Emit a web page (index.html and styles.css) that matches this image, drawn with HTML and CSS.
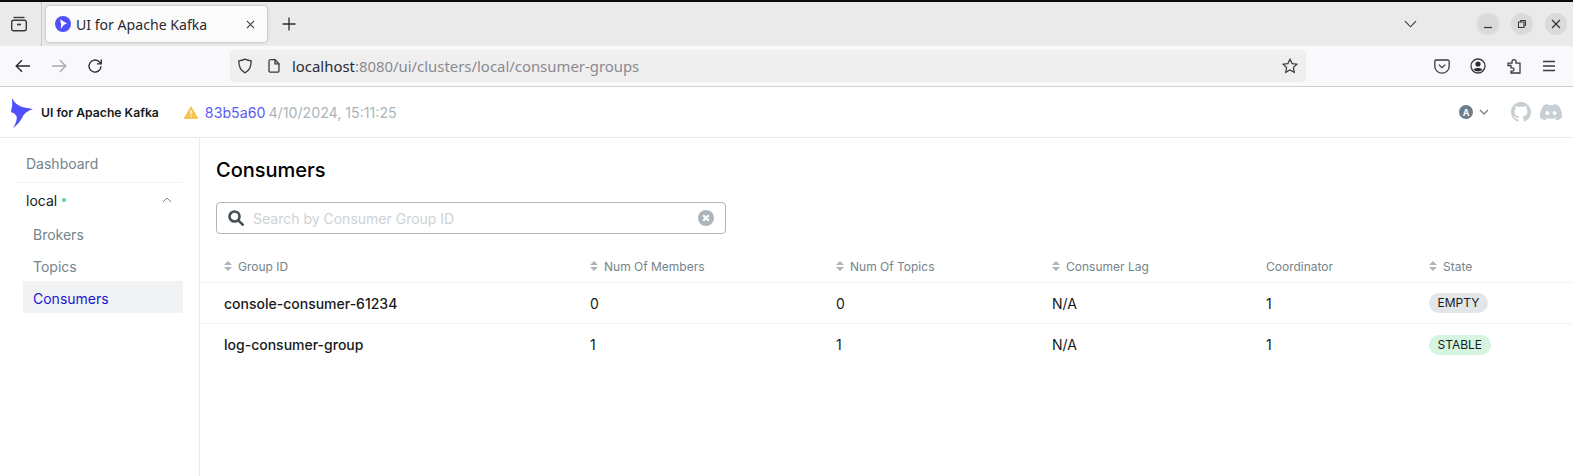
FILE: index.html
```html
<!DOCTYPE html>
<html lang="en">
<head>
<meta charset="utf-8">
<title>UI for Apache Kafka</title>
<link rel="stylesheet" href="styles.css">
</head>
<body>
<div class="tabbar">
  <div class="tabs-btn">
    <svg width="18" height="18" viewBox="0 0 18 18" fill="none" stroke="#3a3a3e" stroke-width="1.4"><path d="M3.500 2.500h11"/><rect x="1.700" y="5.200" width="14.600" height="10.600" rx="2"/><path d="M7 9.500h4" stroke-width="1.600"/></svg>
  </div>
  <div class="tab">
    <svg class="favicon" width="16" height="16" viewBox="0 0 16 16"><circle cx="8" cy="8" r="8" fill="#4f4ffb"/><path d="M5 3.200l7 4.300-3 1.300-3.200 4.200.4-4.300z" fill="#fff"/></svg>
    <span class="tab-title">UI for Apache Kafka</span>
    <svg class="tab-close" width="9" height="9" viewBox="0 0 10 10" stroke="#3a3a3e" stroke-width="1.200"><path d="M1 1l8 8M9 1l-8 8"/></svg>
  </div>
  <svg class="newtab" width="14" height="14" viewBox="0 0 14 14" stroke="#2b2a33" stroke-width="1.300"><path d="M7 .5v13M.5 7h13"/></svg>
  <div class="tabbar-right">
    <svg class="tablist" width="13" height="8" viewBox="0 0 14 8" fill="none" stroke="#3a3a3e" stroke-width="1.200"><path d="M1 1l6 6 6-6"/></svg>
    <span class="winbtn"><svg width="10" height="10" viewBox="0 0 10 10" stroke="#333" stroke-width="1.200"><path d="M1 8.500h8"/></svg></span>
    <span class="winbtn"><svg width="10" height="10" viewBox="0 0 10 10" fill="none" stroke="#333" stroke-width="1"><rect x="1.500" y="3" width="5.500" height="5.500"/><path d="M3.500 3V1.500h5v5H7"/></svg></span>
    <span class="winbtn"><svg width="10" height="10" viewBox="0 0 10 10" stroke="#333" stroke-width="1.200"><path d="M1 1l8 8M9 1l-8 8"/></svg></span>
  </div>
</div>
<div class="toolbar">
  <svg class="tool back" width="16" height="14" viewBox="0 0 16 14" fill="none" stroke="#2b2a33" stroke-width="1.400"><path d="M15 7H1.500M7 1.200L1.200 7 7 12.800"/></svg>
  <svg class="tool fwd" width="16" height="14" viewBox="0 0 16 14" fill="none" stroke="#a9a9ad" stroke-width="1.400"><path d="M1 7h13.500M9 1.200L14.800 7 9 12.800"/></svg>
  <svg class="tool reload" width="16" height="16" viewBox="0 0 16 16" fill="none" stroke="#2b2a33" stroke-width="1.400"><path d="M14 8.200A6 6 0 1 1 12 3.600L14 5.600"/><path d="M14.300 1.400v4.400H9.900" stroke-width="1.300"/></svg>
  <div class="urlbar">
    <svg class="shield" width="16" height="16" viewBox="0 0 16 16" fill="none" stroke="#3a3a3e" stroke-width="1.300"><path d="M8 1.200c2 1 4 1.500 6.200 1.600 0 5-1 9.600-6.200 12-5.200-2.400-6.200-7-6.200-12C4 2.700 6 2.200 8 1.200z"/></svg>
    <svg class="page" width="12" height="14" viewBox="0 0 12 14" fill="none" stroke="#3a3a3e" stroke-width="1.300"><path d="M1 2.200a1.500 1.500 0 0 1 1.500-1.500h4.500l4 4v7a1.500 1.500 0 0 1-1.500 1.500h-7A1.500 1.500 0 0 1 1 12.200z"/><path d="M7 .8v4h4"/></svg>
    <span class="url"><span class="url-host">localhost</span>:8080/ui/clusters/local/consumer-groups</span>
    <svg class="star" width="16" height="16" viewBox="0 0 16 16" fill="none" stroke="#3a3a3e" stroke-width="1.200"><path d="M8 1.200l2.100 4.400 4.800.6-3.500 3.300.9 4.800L8 12l-4.300 2.300.9-4.800L1.100 6.200l4.800-.6z"/></svg>
  </div>
  <div class="toolbar-right">
    <svg width="16" height="15" viewBox="0 0 16 15" fill="none" stroke="#3a3a3e" stroke-width="1.300"><path d="M2.200 1h11.600A1.400 1.400 0 0 1 15.200 2.400V7a7.200 7.200 0 0 1-14.400 0V2.400A1.400 1.400 0 0 1 2.200 1z"/><path d="M4.800 5.600L8 8.600l3.200-3"/></svg>
    <svg width="16" height="16" viewBox="0 0 16 16"><circle cx="8" cy="8" r="7" fill="none" stroke="#3a3a3e" stroke-width="1.300"/><circle cx="8" cy="6" r="2.600" fill="#2b2a33"/><path d="M3.500 11.500c2-2 7-2 9 0-2 2.500-7 2.500-9 0z" fill="#2b2a33"/></svg>
    <svg width="16" height="16" viewBox="0 0 16 16" fill="none" stroke="#3a3a3e" stroke-width="1.300"><path d="M1 4.500h4V3a2 2 0 0 1 4 0v1.500h4v9.800H4v-1.800h1.300a1.700 1.700 0 0 0 0-3.400H4V6.800H1z" transform="translate(1 .7)"/></svg>
    <svg width="14" height="12" viewBox="0 0 14 12" stroke="#3a3a3e" stroke-width="1.300"><path d="M1 1.500h12M1 6h12M1 10.500h12"/></svg>
  </div>
</div>
<header class="appnav">
  <svg class="logo" width="24" height="30" viewBox="0 0 24 30"><path d="M2 0Q6 8 14 9.500L23 11Q15 14 13 18Q10 25 3 30Q8 22 6.500 18Q5 15 1 14Q3 7 2 0z" fill="#4f4ffb"/></svg>
  <span class="brand">UI for Apache Kafka</span>
  <svg class="warn" width="14" height="13" viewBox="0 0 14 13"><path d="M7 .6l6.800 11.800H.2z" fill="#f5c451" stroke="#f5c451" stroke-linejoin="round"/><path d="M7 4.300v4M7 9.600v1.300" stroke="#fff" stroke-width="1.200"/></svg>
  <a class="commit">83b5a60</a>
  <span class="version-date">4/10/2024, 15:11:25</span>
  <div class="appnav-right">
    <span class="avatar">A</span>
    <svg class="caret" width="10" height="6" viewBox="0 0 10 6" fill="none" stroke="#73848c" stroke-width="1.300"><path d="M1 1l4 4 4-4"/></svg>
    <svg class="github" width="20" height="20" viewBox="0 0 16 16"><path fill="#c8cfd3" d="M8 0C3.580 0 0 3.580 0 8c0 3.540 2.290 6.530 5.470 7.590.4.070.55-.170.55-.380 0-.190-.010-.820-.010-1.490-2.010.370-2.530-.490-2.690-.940-.090-.230-.480-.940-.820-1.130-.280-.150-.680-.520-.010-.530.630-.010 1.080.580 1.230.820.720 1.210 1.870.870 2.330.660.070-.520.280-.870.510-1.070-1.780-.200-3.640-.890-3.640-3.950 0-.870.310-1.590.820-2.150-.080-.200-.360-1.020.080-2.120 0 0 .670-.210 2.200.820.640-.180 1.320-.270 2-.270s1.360.090 2 .270c1.530-1.040 2.200-.820 2.200-.820.440 1.100.160 1.920.080 2.120.510.560.820 1.270.820 2.150 0 3.070-1.870 3.750-3.650 3.950.290.250.540.730.540 1.480 0 1.070-.010 1.930-.010 2.200 0 .210.150.460.550.380A8.010 8.010 0 0 0 16 8c0-4.420-3.580-8-8-8z"/></svg>
    <svg class="discord" width="22" height="17" viewBox="0 0 22 17"><path fill="#c8cfd3" d="M18.600 1.400A18 18 0 0 0 14.100 0l-.6 1.200a17 17 0 0 0-5 0L7.900 0a18 18 0 0 0-4.500 1.400C.5 5.600-.300 9.700.100 13.800A18 18 0 0 0 5.600 16.600l1.200-1.900c-.6-.2-1.300-.5-1.800-.9l.4-.3a13 13 0 0 0 11.200 0l.4.300c-.6.400-1.200.7-1.800.9l1.200 1.900a18 18 0 0 0 5.500-2.800c.5-4.700-.8-8.800-3.300-12.400zM7.400 11.300c-1.100 0-2-1-2-2.200s.9-2.200 2-2.200 2 1 2 2.200-.9 2.200-2 2.200zm7.200 0c-1.100 0-2-1-2-2.200s.9-2.200 2-2.200 2 1 2 2.200-.9 2.200-2 2.200z"/></svg>
  </div>
</header>
<div class="layout">
  <aside class="sidebar">
    <div class="side-item dashboard">Dashboard</div>
    <div class="cluster"><span class="cluster-name">local</span><span class="dot"></span>
      <svg class="chev" width="10" height="6" viewBox="0 0 10 6" fill="none" stroke="#73848c" stroke-width="1"><path d="M1 5l4-4 4 4"/></svg>
    </div>
    <div class="side-sub">Brokers</div>
    <div class="side-sub">Topics</div>
    <div class="side-sub active">Consumers</div>
  </aside>
  <main class="content">
    <h1 class="title">Consumers</h1>
    <div class="search">
      <svg class="search-icon" width="16" height="16" viewBox="0 0 16 16" fill="none" stroke="#454f54" stroke-width="2.600"><circle cx="6.500" cy="6.500" r="5"/><path d="M10.300 10.300l4.400 4.400" stroke-linecap="round"/></svg>
      <span class="placeholder">Search by Consumer Group ID</span>
      <svg class="clear" width="16" height="16" viewBox="0 0 16 16"><circle cx="8" cy="8" r="8" fill="#abb5ba"/><path d="M5.200 5.200l5.600 5.600M10.800 5.200l-5.600 5.600" stroke="#fff" stroke-width="2.200"/></svg>
    </div>
    <div class="table">
      <div class="row head">
        <div class="cell sortable"><svg class="sort" width="8" height="10" viewBox="0 0 8 10"><path d="M4 0l4 4H0zM4 10L0 6h8z" fill="#abb5ba"/></svg>Group ID</div>
        <div class="cell sortable"><svg class="sort" width="8" height="10" viewBox="0 0 8 10"><path d="M4 0l4 4H0zM4 10L0 6h8z" fill="#abb5ba"/></svg>Num Of Members</div>
        <div class="cell sortable"><svg class="sort" width="8" height="10" viewBox="0 0 8 10"><path d="M4 0l4 4H0zM4 10L0 6h8z" fill="#abb5ba"/></svg>Num Of Topics</div>
        <div class="cell sortable"><svg class="sort" width="8" height="10" viewBox="0 0 8 10"><path d="M4 0l4 4H0zM4 10L0 6h8z" fill="#abb5ba"/></svg>Consumer Lag</div>
        <div class="cell">Coordinator</div>
        <div class="cell sortable"><svg class="sort" width="8" height="10" viewBox="0 0 8 10"><path d="M4 0l4 4H0zM4 10L0 6h8z" fill="#abb5ba"/></svg>State</div>
      </div>
      <div class="row body">
        <div class="cell group">console-consumer-61234</div>
        <div class="cell">0</div>
        <div class="cell">0</div>
        <div class="cell">N/A</div>
        <div class="cell">1</div>
        <div class="cell"><span class="tag empty">EMPTY</span></div>
      </div>
      <div class="row body">
        <div class="cell group">log-consumer-group</div>
        <div class="cell">1</div>
        <div class="cell">1</div>
        <div class="cell">N/A</div>
        <div class="cell">1</div>
        <div class="cell"><span class="tag stable">STABLE</span></div>
      </div>
    </div>
  </main>
</div>
</body>
</html>
```
FILE: styles.css
```css
* { box-sizing: border-box; }
html, body { margin: 0; padding: 0; height: 100%; overflow: hidden; }
body { background: #fff; font-family: Inter, "Noto Sans", sans-serif; color: #171a1c; height: 476px; display: flex; flex-direction: column; }
svg { display: block; flex: none; }

.tabbar { height: 46px; flex: none; border-top: 2px solid #0b0b0b; background: #eaeaea; display: flex; align-items: center; }
.tabs-btn { width: 42px; height: 44px; border-right: 1px solid #c9c9c9; display: flex; align-items: center; padding-left: 10px; }
.tab { margin-left: 4px; width: 221px; height: 36px; background: #fbfbfb; border-radius: 4px; box-shadow: 0 0 3px rgba(0,0,0,.3); display: flex; align-items: center; padding-left: 9px; padding-right: 12px; }
.favicon { margin-right: 5px; }
.tab-title { font-family: "Noto Sans", sans-serif; font-size: 14.100px; color: #2b2a33; flex: 1; white-space: nowrap; }
.newtab { margin-left: 15px; }
.tabbar-right { margin-left: auto; display: flex; align-items: center; padding-right: 6px; }
.tablist { margin-right: 60px; }
.winbtn { width: 22px; height: 22px; border-radius: 50%; background: #dadada; display: flex; align-items: center; justify-content: center; margin-left: 12px; }
.winbtn:first-of-type { margin-left: 0; }

.toolbar { height: 41px; flex: none; background: #f9f9fb; border-bottom: 1px solid #cfcfd1; display: flex; align-items: center; }
.back { margin-left: 15px; }
.fwd { margin-left: 20px; }
.reload { margin-left: 20px; }
.urlbar { margin-left: 127px; width: 1076px; height: 32px; background: #efeff0; border-radius: 4px; display: flex; align-items: center; padding-left: 7px; padding-right: 8px; }
.page { margin-left: 15px; }
.url { margin-left: 12px; font-family: "Noto Sans", sans-serif; font-size: 14.900px; color: #8a8a8e; flex: 1; white-space: nowrap; }
.url-host { color: #2b2a33; }
.toolbar-right { margin-left: auto; display: flex; align-items: center; gap: 20px; padding-right: 17px; }

.appnav { height: 51px; flex: none; border-bottom: 1px solid #e7eaeb; display: flex; align-items: center; padding-left: 10px; }
.logo { margin-top: 2px; }
.brand { margin-left: 7px; font-size: 12.200px; font-weight: 600; color: #171a1c; white-space: nowrap; }
.warn { margin-left: 25px; }
.commit { margin-left: 7px; font-size: 14.200px; color: #5b5bf5; }
.version-date { margin-left: 3px; font-size: 14.200px; color: #abb5ba; }
.appnav-right { margin-left: auto; display: flex; align-items: center; padding-right: 11px; }
.avatar { width: 14px; height: 14px; border-radius: 50%; background: #6b7d88; color: #fff; font-size: 9px; font-weight: 700; display: flex; align-items: center; justify-content: center; }
.caret { margin-left: 6px; }
.github { margin-left: 22px; }
.discord { margin-left: 9px; }

.layout { flex: 1; display: flex; min-height: 0; }
.sidebar { width: 200px; flex: none; border-right: 1px solid #e7eaeb; padding: 8px 16px 0 23px; }
.side-item, .side-sub { font-size: 14px; color: #73848c; }
.dashboard { height: 37px; line-height: 35px; margin-left: -8px; padding-left: 11px; border-bottom: 1px solid #f1f2f3; }
.cluster { height: 34px; padding-top: 1px; display: flex; align-items: center; padding-left: 3px; padding-right: 11px; font-size: 14px; color: #171a1c; }
.dot { width: 4px; height: 4px; border-radius: 50%; background: #5ad58a; margin-left: 5px; margin-top: -1px; }
.chev { margin-left: auto; margin-top: -2px; }
.side-sub { height: 32px; line-height: 36px; padding-left: 10px; }
.side-sub.active { background: #f1f2f3; color: #1717cf; }

.content { flex: 1; min-width: 0; }
.title { margin: 0; padding: 18px 0 0 16px; font-size: 20px; font-weight: 500; line-height: 28px; color: #000; height: 64px; }
.search { margin-left: 16px; width: 510px; height: 32px; border: 1px solid #abb5ba; border-radius: 4px; display: flex; align-items: center; padding-left: 11px; padding-right: 11px; }
.placeholder { margin-left: 9px; font-size: 14px; color: #cdd3d6; flex: 1; }
.table { margin-top: 16px; }
.row { display: grid; grid-template-columns: 366px 246px 216px 214px 163px 1fr; padding-left: 24px; border-bottom: 1px solid #f1f2f3; align-items: center; }
.row:last-child { border-bottom: 0; }
.row.head { height: 33px; font-size: 12px; color: #73848c; }
.row.body { height: 41px; font-size: 14px; color: #171a1c; }
.cell { display: flex; align-items: center; white-space: nowrap; }
.sort { margin-right: 6px; }
.group { font-weight: 500; }
.tag { height: 20px; line-height: 20px; border-radius: 10px; padding: 0 8.500px; font-size: 12px; color: #171a1c; }
.tag.empty { background: #e3e6e8; }
.tag.stable { background: #d6f5e0; }
```
